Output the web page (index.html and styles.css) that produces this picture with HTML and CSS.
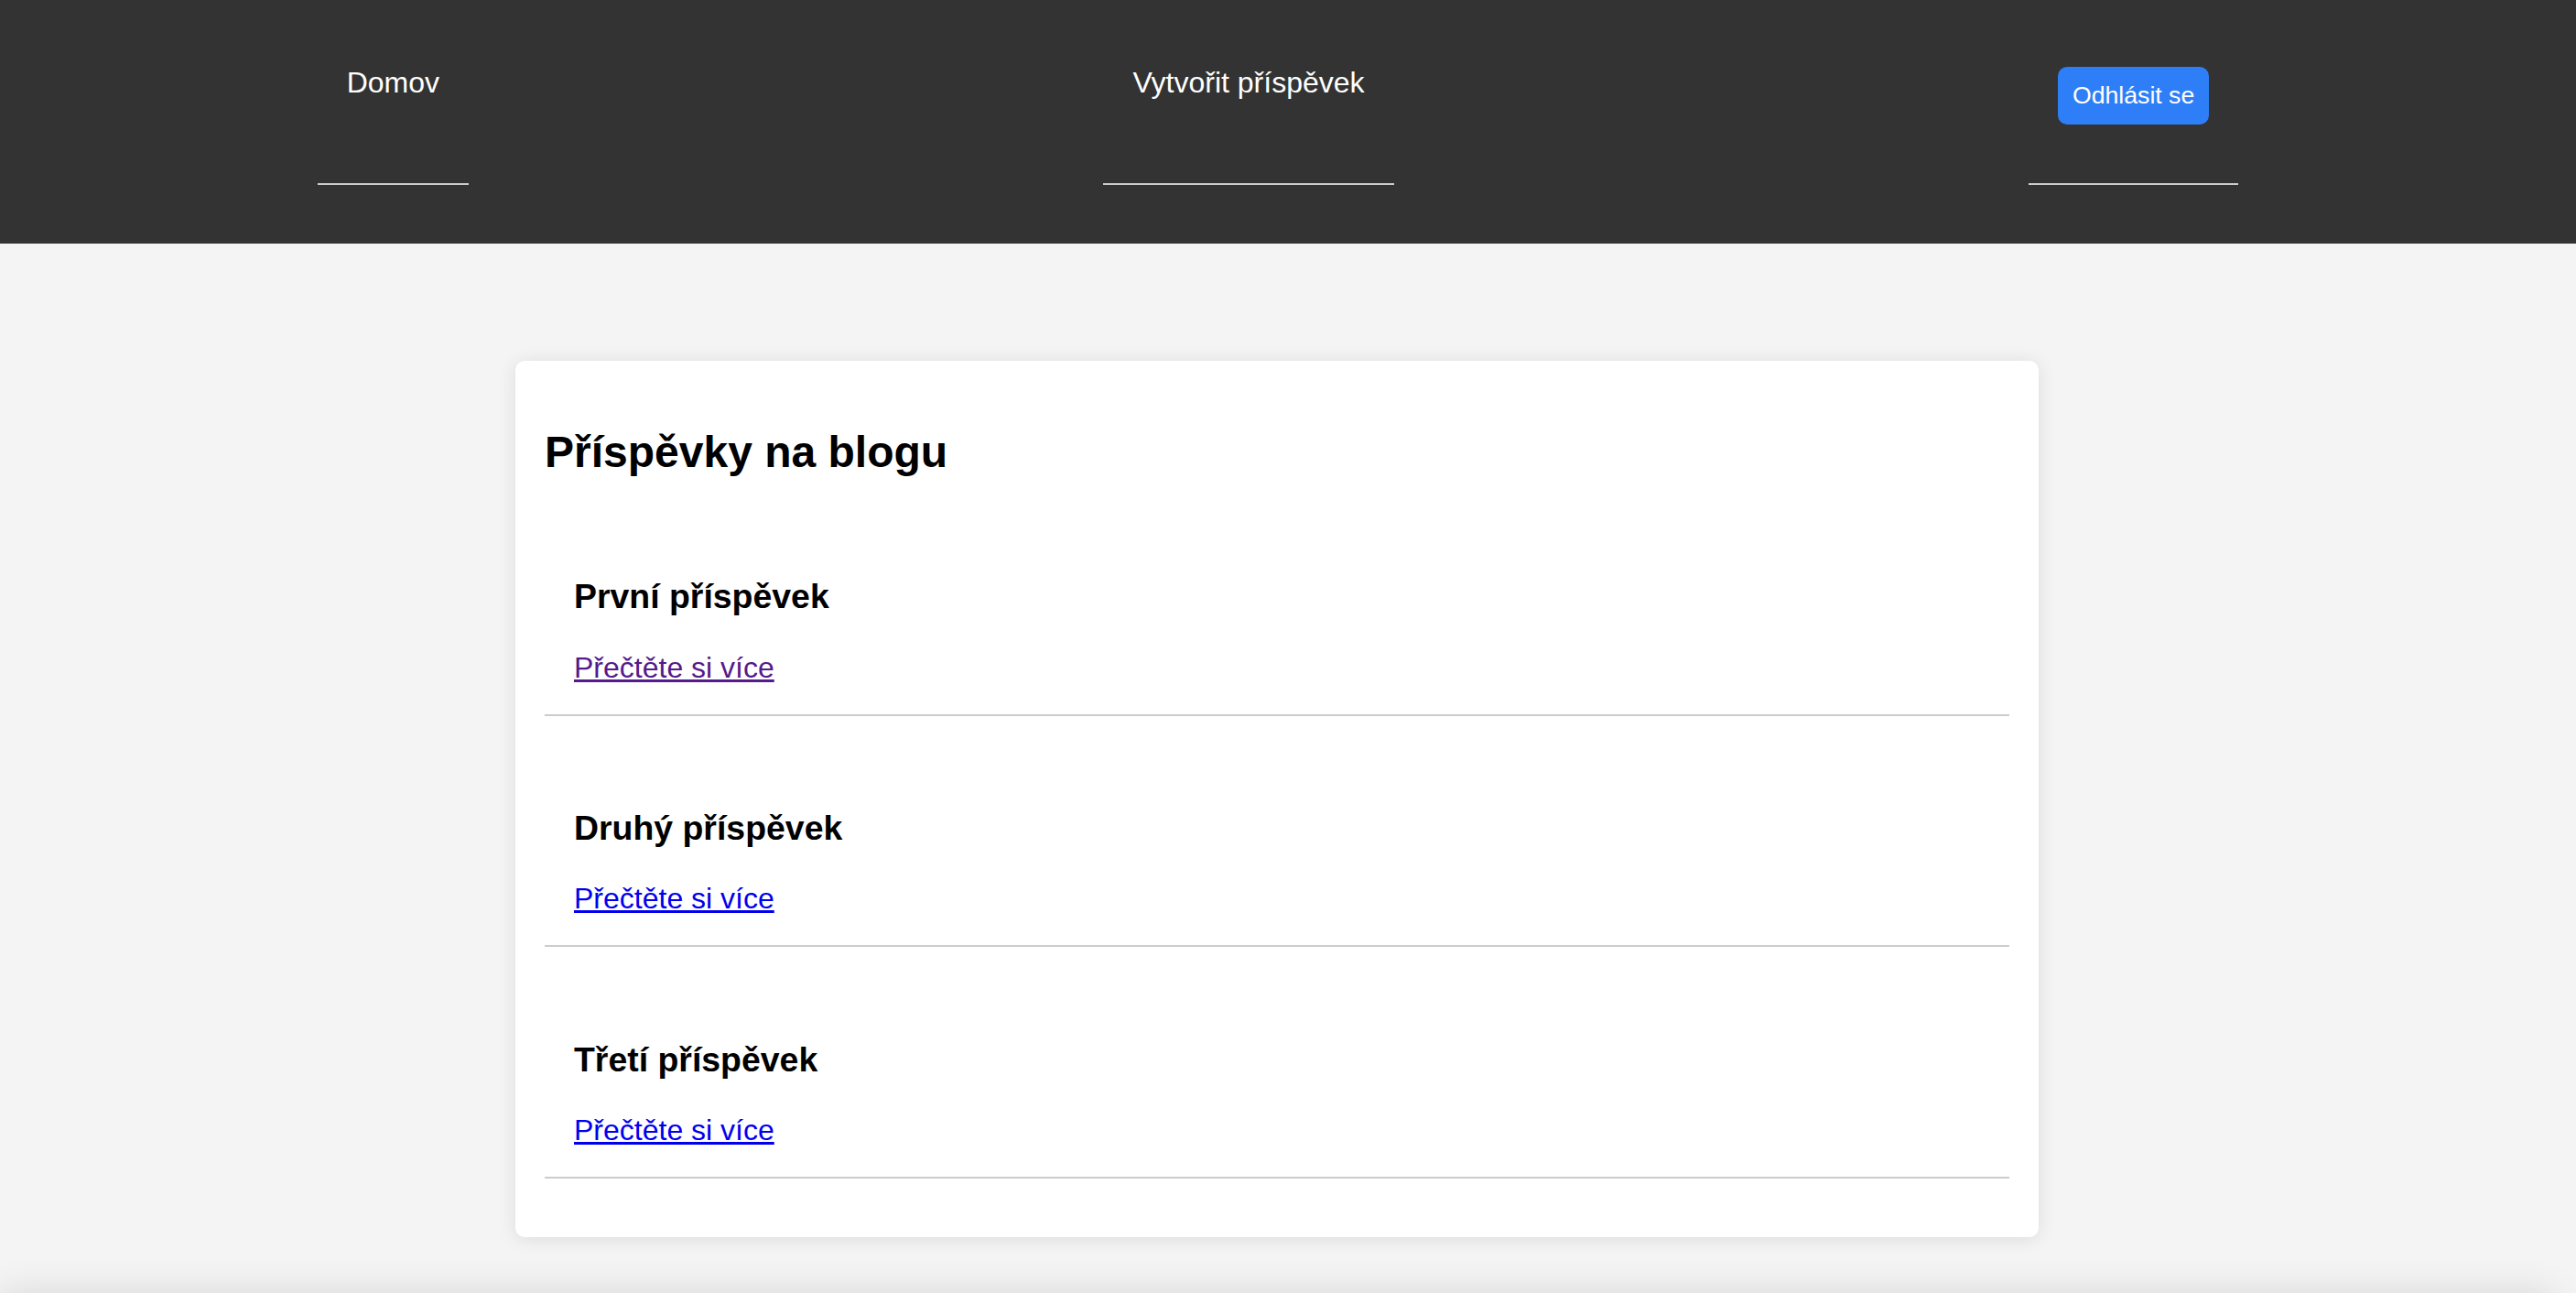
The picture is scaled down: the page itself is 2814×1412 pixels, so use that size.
FILE: index.html
```html
<!DOCTYPE html>
<html lang="cs">
<head>
<meta charset="utf-8">
<title>Blog</title>
<link rel="stylesheet" href="styles.css">
</head>
<body>
<header class="site-header">
  <nav>
    <ul class="nav-list">
      <li class="nav-item"><a href="#" class="nav-link">Domov</a></li>
      <li class="nav-item"><a href="#" class="nav-link">Vytvořit příspěvek</a></li>
      <li class="nav-item"><button class="logout-btn" type="button">Odhlásit se</button></li>
    </ul>
  </nav>
</header>
<main class="main">
  <section class="card">
    <h2 class="card-title">Příspěvky na blogu</h2>
    <div class="post">
      <h3 class="post-title">První příspěvek</h3>
      <a href="#" class="read-more visited">Přečtěte si více</a>
    </div>
    <div class="post">
      <h3 class="post-title">Druhý příspěvek</h3>
      <a href="#" class="read-more">Přečtěte si více</a>
    </div>
    <div class="post">
      <h3 class="post-title">Třetí příspěvek</h3>
      <a href="#" class="read-more">Přečtěte si více</a>
    </div>
  </section>
</main>
<footer class="site-footer"></footer>
</body>
</html>
```

FILE: styles.css
```css
html, body {
  margin: 0;
  padding: 0;
}

body {
  background: #f4f4f4;
  color: #000;
  font-family: "Liberation Sans", Arial, Helvetica, sans-serif;
  overflow: hidden;
}

.site-header {
  background: #333333;
  padding: 64px 22px 64px 0;
}

.nav-list {
  display: flex;
  justify-content: space-around;
  list-style: none;
  margin: 0;
  padding: 0;
}

.nav-item {
  box-sizing: border-box;
  height: 138px;
  padding: 8px 32px 0;
  border-bottom: 2px solid #cccccc;
  font-size: 32px;
}

.nav-link {
  color: #ffffff;
  text-decoration: none;
  font-size: 32px;
}

.logout-btn {
  background: #2e7ff7;
  color: #ffffff;
  border: none;
  border-radius: 10px;
  padding: 16px;
  margin-top: 1px;
  font-family: "Liberation Sans", Arial, Helvetica, sans-serif;
  font-size: 26.67px;
  cursor: pointer;
}

.main {
  padding: 128px 24px 61px 0;
}

.card {
  width: 1600px;
  margin: 0 auto;
  padding: 32px;
  background: #ffffff;
  border-radius: 10px;
  box-shadow: 0 2px 20px rgba(0, 0, 0, 0.1);
}

.card-title {
  font-size: 48px;
  font-weight: bold;
  margin: 39.84px 0;
}

.post {
  padding: 32px;
  margin-bottom: 32px;
  border-bottom: 2px solid #cccccc;
  font-size: 32px;
}

.post-title {
  font-size: 37.44px;
  font-weight: bold;
  margin: 37.44px 0;
}

.read-more {
  color: #0000ee;
  font-size: 32px;
  text-decoration: underline;
}

.read-more.visited {
  color: #551a8b;
}

.site-footer {
  height: 120px;
  margin-right: 24px;
  background: #f4f4f4;
  box-shadow: 0 0 40px rgba(0, 0, 0, 0.12);
}
```
